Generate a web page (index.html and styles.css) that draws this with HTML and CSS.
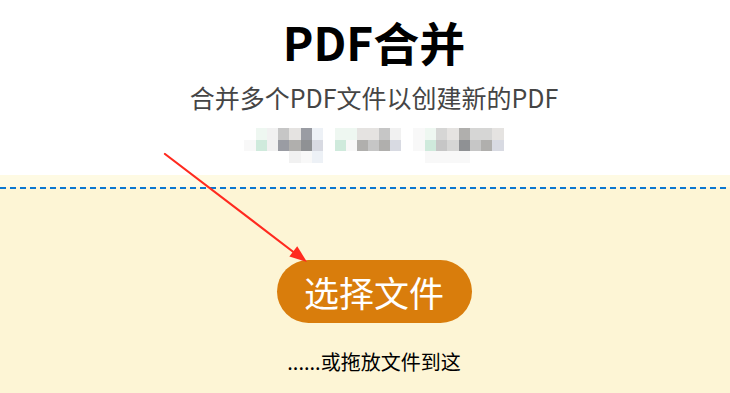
FILE: index.html
```html
<!DOCTYPE html>
<html lang="zh-CN">
<head>
<meta charset="utf-8">
<title>PDF合并</title>
<link rel="stylesheet" href="styles.css">
</head>
<body>
<header class="hero">
  <h1 class="title">PDF合并</h1>
  <p class="subtitle">合并多个PDF文件以创建新的PDF</p>
  <div class="mosaic" aria-hidden="true">
    <div class="grp g7">
      <i></i><i class="gr"></i><i class="w1"></i><i class="m1"></i><i class="l1"></i><i class="d1"></i><i class="b1"></i>
      <i class="w0"></i><i class="gm"></i><i class="w1"></i><i class="d1"></i><i class="m2"></i><i class="d2"></i><i class="b2"></i>
      <i></i><i></i><i></i><i></i><i class="w1"></i><i class="w0"></i><i class="b1"></i>
    </div>
    <div class="grp g6">
      <i class="gr"></i><i class="gr"></i><i class="l1"></i><i class="l1"></i><i class="m1"></i><i class="w1"></i>
      <i class="gm"></i><i class="w0"></i><i class="m2"></i><i class="m1"></i><i class="m2"></i><i class="b2"></i>
    </div>
    <div class="grp g8">
      <i class="w0"></i><i class="gr"></i><i class="l2"></i><i class="l1"></i><i class="m2"></i><i class="l2"></i><i class="l2"></i><i class="l1"></i>
      <i class="w0"></i><i class="gm"></i><i class="m1"></i><i class="l2"></i><i class="d2"></i><i class="m1"></i><i class="m2"></i><i class="b2"></i>
      <i></i><i class="w0"></i><i class="w0"></i><i class="w0"></i><i class="w0"></i><i></i><i></i><i></i>
    </div>
  </div>
</header>
<section class="dropzone">
  <div class="drop-inner">
    <div class="dash"></div>
    <div class="drop-content">
      <button class="pick-btn" type="button">选择文件</button>
      <p class="drop-hint">......或拖放文件到这</p>
    </div>
  </div>
</section>
<svg class="arrow" width="730" height="393" viewBox="0 0 730 393" aria-hidden="true">
  <line x1="165" y1="154" x2="296" y2="254" stroke="#ff2a1f" stroke-width="2.2" stroke-linecap="round"/>
  <polygon points="307,262 289.4,256.4 297.2,246.2" fill="#ff2a1f"/>
</svg>
</body>
</html>
```
FILE: styles.css
```css
html, body {
  margin: 0;
  padding: 0;
  background: #ffffff;
}
body {
  font-family: "Noto Sans", "Noto Sans CJK SC", sans-serif;
  color: #000;
  width: 730px;
  height: 393px;
  overflow: hidden;
  position: relative;
}
.hero {
  height: 175px;
  display: flex;
  flex-direction: column;
  align-items: center;
  padding-left: 18px;
  box-sizing: border-box;
}
.title {
  margin: 13px 0 0;
  font-family: "Noto Sans CJK SC", sans-serif;
  font-weight: 700;
  font-size: 46px;
  line-height: 56px;
  color: #000;
}
.subtitle {
  margin: 12px 0 0;
  font-family: "Noto Sans CJK SC", sans-serif;
  font-size: 25px;
  line-height: 32px;
  color: #454545;
}
.mosaic {
  margin-top: 15px;
  display: flex;
  gap: 12px;
  padding-right: 0;
}
.grp {
  display: grid;
  grid-auto-rows: 11.5px;
}
.g7 { grid-template-columns: repeat(7, 11.3px); margin-left: 0; }
.g6 { grid-template-columns: repeat(6, 11px); }
.g8 { grid-template-columns: repeat(8, 11.3px); }
.grp i { display: block; }
.w0 { background: #f8f8f8; }
.w1 { background: #f1f1f1; }
.gr { background: #eef7f1; }
.gm { background: #cfeadc; }
.l1 { background: #e5e3e1; }
.l2 { background: #d6d6d5; }
.m1 { background: #c6c6c6; }
.m2 { background: #b0afad; }
.d1 { background: #9a9ca3; }
.d2 { background: #8f9194; }
.b1 { background: #edf1f6; }
.b2 { background: #d8dae2; }

.dropzone {
  background: #fefae3;
  padding-top: 12px;
  height: 218px;
  box-sizing: border-box;
}
.drop-inner {
  background: #fdf5d5;
  height: 100%;
}
.dash {
  height: 2px;
  background: repeating-linear-gradient(to right, #0a78d2 0 6px, transparent 6px 10px);
}
.drop-content {
  display: flex;
  flex-direction: column;
  align-items: center;
  padding-left: 18px;
}
.pick-btn {
  margin-top: 71px;
  height: 63px;
  width: 195px;
  border: none;
  border-radius: 32px;
  background: #d97d0c;
  color: #ffffff;
  font-family: "Noto Sans CJK SC", sans-serif;
  font-size: 35px;
  line-height: 63px;
  padding: 0;
  letter-spacing: 0;
}
.drop-hint {
  margin: 25px 0 0;
  font-family: "Noto Sans CJK SC", sans-serif;
  font-size: 20px;
  line-height: 28px;
  color: #000;
}
.arrow {
  position: absolute;
  left: 0;
  top: 0;
  pointer-events: none;
}
```
